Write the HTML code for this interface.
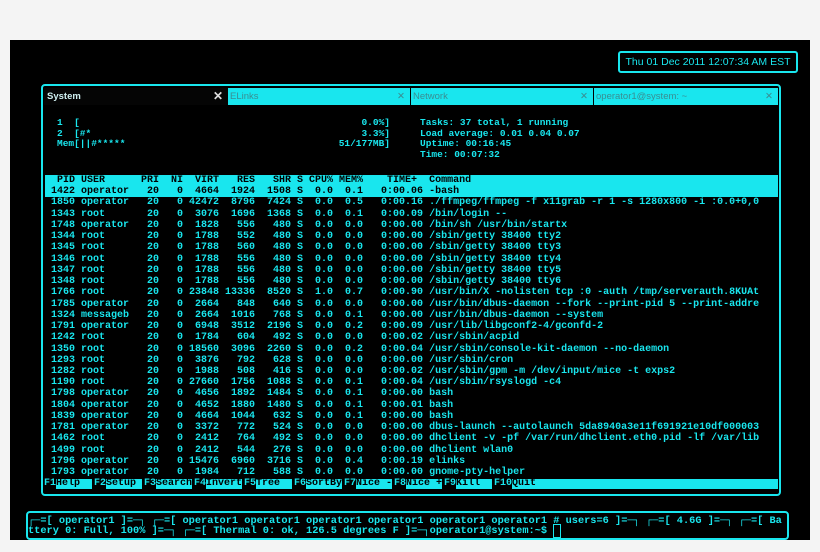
<!DOCTYPE html>
<html><head><meta charset="utf-8"><style>
html,body{margin:0;padding:0;background:#f4f4f4;width:820px;height:552px;overflow:hidden;}
.scr{position:absolute;left:10px;top:40px;width:800px;height:500px;background:#000;}
.mono{font-family:"Liberation Mono",monospace;font-weight:bold;white-space:pre;}
.date{position:absolute;left:618px;top:51px;width:176px;height:18px;border:2px solid #19e6ee;border-radius:3px;color:#19e6ee;font-family:"Liberation Sans",sans-serif;font-size:10.5px;line-height:18px;text-align:center;}
.panel{position:absolute;left:41px;top:84px;width:736px;height:408px;border:2px solid #19e6ee;border-radius:4px;}
.tab{position:absolute;top:88px;height:17px;font-family:"Liberation Sans",sans-serif;font-size:9.5px;line-height:17px;}
.tab span{position:absolute;right:5px;top:0;}
.rows{position:absolute;left:45px;top:175px;font-size:10px;line-height:11.24px;color:#19e6ee;width:733px;overflow:hidden;}
.hl{background:#19e6ee;color:#000;}
.meter{position:absolute;font-size:9.5px;line-height:10.5px;color:#19e6ee;}
.fb{position:absolute;top:479px;left:44px;height:10px;width:734px;font-size:10px;line-height:10px;}
.fb b{display:inline-block;height:10px;}
.k{color:#19e6ee;width:12px;}
.l{background:#19e6ee;color:#000;width:36px;margin-right:2px;}
.bot{position:absolute;left:26px;top:511px;width:763px;height:25px;border:2px solid #19e6ee;border-radius:4px;color:#19e6ee;font-size:10.3px;line-height:10px;overflow:hidden;padding-top:3px;box-sizing:border-box;height:29px;}
</style></head><body>
<div class="scr"></div>
<div class="date">Thu 01 Dec 2011 12:07:34 AM EST</div>
<div class="panel"></div>
<div class="tab" style="left:44px;width:184px;background:#050505;color:#cfeff0;font-weight:bold;padding-left:3px;box-sizing:border-box;">System<span style="color:#ddd;font-size:12px;">✕</span></div>
<div class="tab" style="left:228px;width:182px;background:#19e6ee;color:#3a8d92;padding-left:2px;box-sizing:border-box;">ELinks<span>✕</span></div>
<div class="tab" style="left:411px;width:182px;background:#19e6ee;color:#3a8d92;padding-left:2px;box-sizing:border-box;">Network<span>✕</span></div>
<div class="tab" style="left:594px;width:184px;background:#19e6ee;color:#3a8d92;padding-left:2px;box-sizing:border-box;">operator1@system: ~<span>✕</span></div>
<div class="mono meter" style="left:57px;top:118px;">1  [
2  [#*
Mem[||#*****</div>
<div class="mono meter" style="left:300px;top:118px;width:90px;text-align:right;">0.0%]
3.3%]
51/177MB]</div>
<div class="mono meter" style="left:420px;top:118px;">Tasks: 37 total, 1 running
Load average: 0.01 0.04 0.07
Uptime: 00:16:45
Time: 00:07:32</div>
<div class="mono rows"><div class="hl">  PID USER      PRI  NI  VIRT   RES   SHR S CPU% MEM%    TIME+  Command                                                  </div><div class="hl"> 1422 operator   20   0  4664  1924  1508 S  0.0  0.1   0:00.06 -bash                                                    </div> 1850 operator   20   0 42472  8796  7424 S  0.0  0.5   0:00.16 ./ffmpeg/ffmpeg -f x11grab -r 1 -s 1280x800 -i :0.0+0,0
 1343 root       20   0  3076  1696  1368 S  0.0  0.1   0:00.09 /bin/login --
 1748 operator   20   0  1828   556   480 S  0.0  0.0   0:00.00 /bin/sh /usr/bin/startx
 1344 root       20   0  1788   552   480 S  0.0  0.0   0:00.00 /sbin/getty 38400 tty2
 1345 root       20   0  1788   560   480 S  0.0  0.0   0:00.00 /sbin/getty 38400 tty3
 1346 root       20   0  1788   556   480 S  0.0  0.0   0:00.00 /sbin/getty 38400 tty4
 1347 root       20   0  1788   556   480 S  0.0  0.0   0:00.00 /sbin/getty 38400 tty5
 1348 root       20   0  1788   556   480 S  0.0  0.0   0:00.00 /sbin/getty 38400 tty6
 1766 root       20   0 23848 13336  8520 S  1.0  0.7   0:00.90 /usr/bin/X -nolisten tcp :0 -auth /tmp/serverauth.8KUAt
 1785 operator   20   0  2664   848   640 S  0.0  0.0   0:00.00 /usr/bin/dbus-daemon --fork --print-pid 5 --print-addre
 1324 messageb   20   0  2664  1016   768 S  0.0  0.1   0:00.00 /usr/bin/dbus-daemon --system
 1791 operator   20   0  6948  3512  2196 S  0.0  0.2   0:00.09 /usr/lib/libgconf2-4/gconfd-2
 1242 root       20   0  1784   604   492 S  0.0  0.0   0:00.02 /usr/sbin/acpid
 1350 root       20   0 18560  3096  2260 S  0.0  0.2   0:00.04 /usr/sbin/console-kit-daemon --no-daemon
 1293 root       20   0  3876   792   628 S  0.0  0.0   0:00.00 /usr/sbin/cron
 1282 root       20   0  1988   508   416 S  0.0  0.0   0:00.02 /usr/sbin/gpm -m /dev/input/mice -t exps2
 1190 root       20   0 27660  1756  1088 S  0.0  0.1   0:00.04 /usr/sbin/rsyslogd -c4
 1798 operator   20   0  4656  1892  1484 S  0.0  0.1   0:00.00 bash
 1804 operator   20   0  4652  1880  1480 S  0.0  0.1   0:00.01 bash
 1839 operator   20   0  4664  1044   632 S  0.0  0.1   0:00.00 bash
 1781 operator   20   0  3372   772   524 S  0.0  0.0   0:00.00 dbus-launch --autolaunch 5da8940a3e11f691921e10df000003
 1462 root       20   0  2412   764   492 S  0.0  0.0   0:00.00 dhclient -v -pf /var/run/dhclient.eth0.pid -lf /var/lib
 1499 root       20   0  2412   544   276 S  0.0  0.0   0:00.00 dhclient wlan0
 1796 operator   20   0 15476  6960  3716 S  0.0  0.4   0:00.19 elinks
 1793 operator   20   0  1984   712   588 S  0.0  0.0   0:00.00 gnome-pty-helper</div>
<div class="mono fb"><b class="k">F1</b><b class="l">Help  </b><b class="k">F2</b><b class="l">Setup </b><b class="k">F3</b><b class="l">Search</b><b class="k">F4</b><b class="l">Invert</b><b class="k">F5</b><b class="l">Tree  </b><b class="k">F6</b><b class="l">SortBy</b><b class="k">F7</b><b class="l">Nice -</b><b class="k">F8</b><b class="l">Nice +</b><b class="k">F9</b><b class="l">Kill  </b><b class="k" style="width:18px">F10</b><b class="l" style="width:266px;margin:0">Quit</b></div>
<div class="mono bot">┌─=[ operator1 ]=─┐ ┌─=[ operator1 operator1 operator1 operator1 operator1 operator1 # users=6 ]=─┐ ┌─=[ 4.6G ]=─┐ ┌─=[ Ba
ttery 0: Full, 100% ]=─┐ ┌─=[ Thermal 0: ok, 126.5 degrees F ]=─┐operator1@system:~$ <span style="border:1px solid #19e6ee;">&nbsp;</span></div>
</body></html>
